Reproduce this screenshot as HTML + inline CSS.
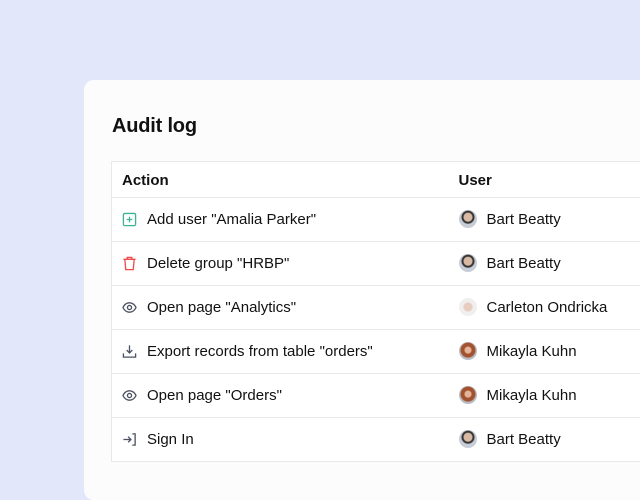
<!DOCTYPE html>
<html><head><meta charset="utf-8"><style>
*{margin:0;padding:0;box-sizing:border-box}
body{width:640px;height:474px;overflow:hidden;background:#e3e7fa;font-family:"Liberation Sans",sans-serif;color:#111;position:relative}
.card{position:absolute;left:84px;top:80px;width:600px;height:420px;background:#fcfcfd;border-radius:10px}
h1{position:absolute;left:28px;top:35px;font-size:20px;font-weight:600;letter-spacing:-0.2px}
table{position:absolute;left:27px;top:81px;width:560px;border-collapse:collapse;border:1px solid #e8e9ec;background:#fff}
td,th{height:44px;border-bottom:1px solid #e8e9ec;font-size:15px;text-align:left;vertical-align:middle;white-space:nowrap}
th{height:36px;font-weight:600;font-size:15px;padding-top:1px}
.a{padding-left:10px;width:337px}
.u{padding-left:10px}
.ic{display:inline-block;width:15px;height:15px;vertical-align:middle;margin-right:10px;margin-top:-2px}
.av{display:inline-block;width:18px;height:18px;border-radius:50%;vertical-align:middle;margin-right:10px;margin-top:-2px}
.bb{background:radial-gradient(circle at 50% 40%,#d9b9a3 0 4px,#333 5px 6px,#c7cdd6 7px)}
.co{background:radial-gradient(circle at 50% 50%,#e7cdbf 0 4px,#f1eeee 5px)}
.mk{background:radial-gradient(circle at 50% 45%,#e3b49a 0 3px,#a3522f 4px 7px,#b8bcc4 8px)}
</style></head><body>
<div class="card">
<h1>Audit log</h1>
<table>
<tr><th class="a">Action</th><th class="u">User</th></tr>
<tr><td class="a"><svg class="ic" viewBox="0 0 16 16" fill="none" stroke="#3bb394" stroke-width="1.4"><rect x="1.5" y="1.5" width="13" height="13" rx="1.5"/><path d="M8 5v6M5 8h6"/></svg>Add user "Amalia Parker"</td><td class="u"><span class="av bb"></span>Bart Beatty</td></tr>
<tr><td class="a"><svg class="ic" viewBox="0 0 16 16" fill="none" stroke="#ef4b4b" stroke-width="1.4"><path d="M1.5 3.5h13M5.5 3.5V1.5h5v2M3 3.5l1 11h8l1-11"/></svg>Delete group "HRBP"</td><td class="u"><span class="av bb"></span>Bart Beatty</td></tr>
<tr><td class="a"><svg class="ic" viewBox="0 0 16 16" fill="none" stroke="#4a5160" stroke-width="1.4"><path d="M1 8c2-4 4.5-5 7-5s5 1 7 5c-2 4-4.5 5-7 5s-5-1-7-5z"/><circle cx="8" cy="8" r="2.2"/></svg>Open page "Analytics"</td><td class="u"><span class="av co"></span>Carleton Ondricka</td></tr>
<tr><td class="a"><svg class="ic" viewBox="0 0 16 16" fill="none" stroke="#4a5160" stroke-width="1.4"><path d="M8 1.5v8M5 6.5l3 3 3-3M1.5 10v4h13v-4"/></svg>Export records from table "orders"</td><td class="u"><span class="av mk"></span>Mikayla Kuhn</td></tr>
<tr><td class="a"><svg class="ic" viewBox="0 0 16 16" fill="none" stroke="#4a5160" stroke-width="1.4"><path d="M1 8c2-4 4.5-5 7-5s5 1 7 5c-2 4-4.5 5-7 5s-5-1-7-5z"/><circle cx="8" cy="8" r="2.2"/></svg>Open page "Orders"</td><td class="u"><span class="av mk"></span>Mikayla Kuhn</td></tr>
<tr><td class="a"><svg class="ic" viewBox="0 0 16 16" fill="none" stroke="#4a5160" stroke-width="1.4"><path d="M1.5 8h8M6.5 5l3 3-3 3M11 2h3v12h-3"/></svg>Sign In</td><td class="u"><span class="av bb"></span>Bart Beatty</td></tr>
</table>
</div>
</body></html>
